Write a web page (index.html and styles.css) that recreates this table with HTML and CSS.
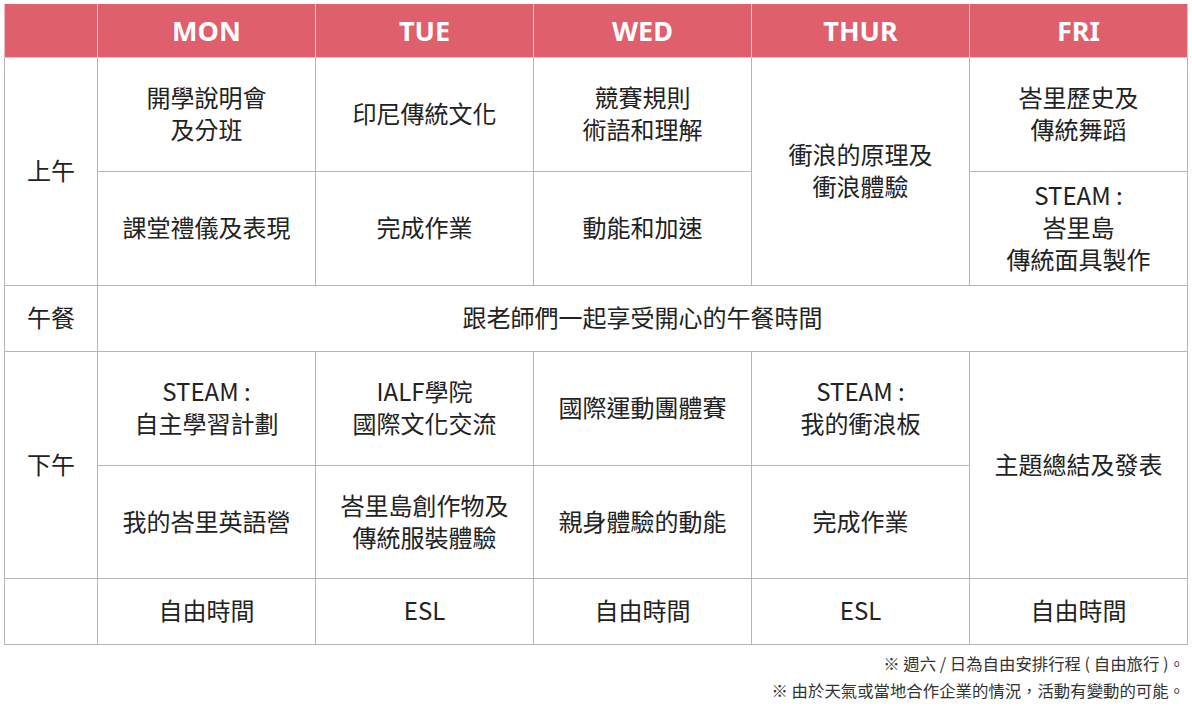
FILE: index.html
```html
<!DOCTYPE html>
<html lang="zh-Hant">
<head>
<meta charset="utf-8">
<link rel="stylesheet" href="styles.css">
</head>
<body>
<div class="page">
<table class="sched">
  <colgroup><col class="c0"><col class="cd"><col class="cd"><col class="cd"><col class="cd"><col class="cd"></colgroup>
  <thead>
    <tr class="hd"><th></th><th>MON</th><th>TUE</th><th>WED</th><th>THUR</th><th>FRI</th></tr>
  </thead>
  <tbody>
    <tr class="r1">
      <td rowspan="2">上午</td>
      <td>開學說明會<br>及分班</td>
      <td>印尼傳統文化</td>
      <td>競賽規則<br>術語和理解</td>
      <td rowspan="2">衝浪的原理及<br>衝浪體驗</td>
      <td>峇里歷史及<br>傳統舞蹈</td>
    </tr>
    <tr class="r2">
      <td>課堂禮儀及表現</td>
      <td>完成作業</td>
      <td>動能和加速</td>
      <td>STEAM :<br>峇里島<br>傳統面具製作</td>
    </tr>
    <tr class="r3">
      <td>午餐</td>
      <td colspan="5">跟老師們一起享受開心的午餐時間</td>
    </tr>
    <tr class="r1">
      <td rowspan="2">下午</td>
      <td>STEAM :<br>自主學習計劃</td>
      <td>IALF學院<br>國際文化交流</td>
      <td>國際運動團體賽</td>
      <td>STEAM :<br>我的衝浪板</td>
      <td rowspan="2">主題總結及發表</td>
    </tr>
    <tr class="r2b">
      <td>我的峇里英語營</td>
      <td>峇里島創作物及<br>傳統服裝體驗</td>
      <td>親身體驗的動能</td>
      <td>完成作業</td>
    </tr>
    <tr class="r3">
      <td></td>
      <td>自由時間</td>
      <td>ESL</td>
      <td>自由時間</td>
      <td>ESL</td>
      <td>自由時間</td>
    </tr>
  </tbody>
</table>
<div class="notes">
  <p>※ 週六 / 日為自由安排行程 ( 自由旅行 )。</p>
  <p>※ 由於天氣或當地合作企業的情況，活動有變動的可能。</p>
</div>
</div>
</body>
</html>
```
FILE: styles.css
```css
html, body { margin: 0; padding: 0; background: #fff; }
body { font-family: "Noto Sans CJK TC", "Noto Sans", sans-serif; color: #222; }
.page { padding: 4px 4px 0 4px; width: 1184px; }
.sched { border-collapse: collapse; table-layout: fixed; width: 1184px; }
.c0 { width: 93px; }
.cd { width: 218px; }
.sched td { border: 1px solid #b5b5b5; text-align: center; vertical-align: middle; font-size: 24px; line-height: 32px; padding: 0 0 3px 0; }
.sched th { background: #df5f6c; color: #fff; font-family: "Noto Sans", "Open Sans", sans-serif; font-weight: 700; font-size: 27px; height: 53px; padding: 0; border-left: 1px solid #f6c9cd; border-right: 1px solid #f6c9cd; border-bottom: 1px solid #f0bcc1; }
.sched th:first-child { border-left: 1px solid #f0bcc1; }
.sched th:last-child { border-right: 1px solid #f0bcc1; }
.r1 td { height: 110px; }
.r2 td { height: 110px; }
.r2b td { height: 109px; }
.r3 td { height: 62px; }
.notes { text-align: right; padding-right: 3px; margin-top: 5px; }
.notes p { margin: 0; font-size: 16.4px; line-height: 27px; color: #333; }
```
